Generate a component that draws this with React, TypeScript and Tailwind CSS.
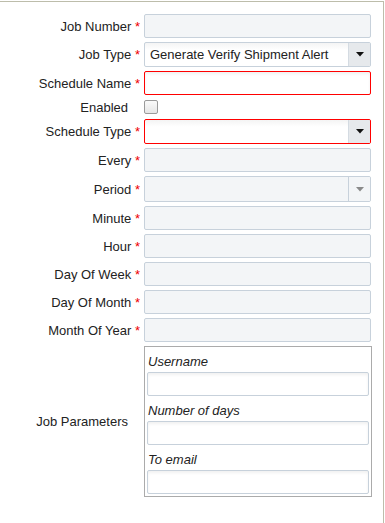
import React from "react";

const font = { fontFamily: '"Liberation Sans", Arial, sans-serif' };

function Label({ text, required }: { text: string; required?: boolean }) {
  return (
    <div className={`flex items-center justify-end text-[13px] leading-[15px] text-[#222] ${required ? "pr-[4px]" : "pr-[16px]"}`}>
      <span>{text}</span>
      {required && <span className="text-[#e00]">&nbsp;*</span>}
    </div>
  );
}

function GreyInput({ h = "h-[24px]" }: { h?: string }) {
  return <div className={`${h} rounded-[2px] border border-[#c7d1db] bg-[#f3f5f7]`} />;
}

function Arrow({ color }: { color: string }) {
  return (
    <svg width="8" height="5" viewBox="0 0 8 5">
      <path d="M0 0 H8 L4 4.5 Z" fill={color} />
    </svg>
  );
}

function Select({
  h,
  value,
  error,
  disabled,
}: {
  h: string;
  value?: string;
  error?: boolean;
  disabled?: boolean;
}) {
  return (
    <div
      className={`${h} flex rounded-[2px] border ${error ? "border-[#f00]" : "border-[#c7d1db]"} ${
        disabled ? "bg-[#f3f5f7]" : "bg-white bg-gradient-to-b from-[#f4f4f4] to-white to-[30%]"
      } overflow-hidden`}
    >
      <div className="flex flex-1 items-center pl-[5px] text-[13px] leading-[15px] text-[#222]">{value}</div>
      <div
        className={`flex w-[22px] items-center justify-center border-l ${
          disabled ? "border-[#c7d1db] bg-[#f3f5f7]" : "border-[#d4dbe2] bg-[#e6e9ec]"
        }`}
      >
        <Arrow color={disabled ? "#8a8a8a" : "#111"} />
      </div>
    </div>
  );
}

function WhiteInput({ error }: { error?: boolean }) {
  return (
    <div
      className={`h-[24px] rounded-[2px] border ${
        error ? "border-[#f00]" : "border-[#c7d1db]"
      } bg-white shadow-[inset_0_2px_3px_rgba(0,0,0,0.06)]`}
    />
  );
}

function ParamLabel({ text, h }: { text: string; h: string }) {
  return (
    <div className={`${h} flex items-end pb-[3px] pl-px text-[13px] leading-[15px] italic text-[#222]`}>{text}</div>
  );
}

export default function App() {
  return (
    <div className="h-[523px] w-[385px] bg-white" style={font}>
      <div className="mt-px h-[522px] w-[384px] border-t border-r border-[#bdbdab] pt-[12px]">
        <div className="grid grid-cols-[144px_227px] gap-y-[4px]">
          <Label text="Job Number" required />
          <GreyInput />

          <Label text="Job Type" required />
          <Select h="h-[25px]" value="Generate Verify Shipment Alert" />

          <Label text="Schedule Name" required />
          <WhiteInput error />

          <Label text="Enabled" />
          <div className="flex h-[16px] items-center">
            <div className="h-[14px] w-[14px] rounded-[2px] border border-[#9a9a9a] bg-gradient-to-b from-[#fafafa] to-[#e6e6e6]" />
          </div>

          <Label text="Schedule Type" required />
          <Select h="h-[25px]" error />

          <Label text="Every" required />
          <GreyInput />

          <Label text="Period" required />
          <Select h="h-[26px]" disabled />

          <Label text="Minute" required />
          <GreyInput />

          <Label text="Hour" required />
          <GreyInput />

          <Label text="Day Of Week" required />
          <GreyInput />

          <Label text="Day Of Month" required />
          <GreyInput />

          <Label text="Month Of Year" required />
          <GreyInput />

          <Label text="Job Parameters" />
          <div className="w-[228px] border border-[#ababab] px-[2px] pb-[2px]">
            <ParamLabel text="Username" h="h-[25px]" />
            <WhiteInput />
            <ParamLabel text="Number of days" h="h-[25px]" />
            <WhiteInput />
            <ParamLabel text="To email" h="h-[25px]" />
            <WhiteInput />
          </div>
        </div>
      </div>
    </div>
  );
}
